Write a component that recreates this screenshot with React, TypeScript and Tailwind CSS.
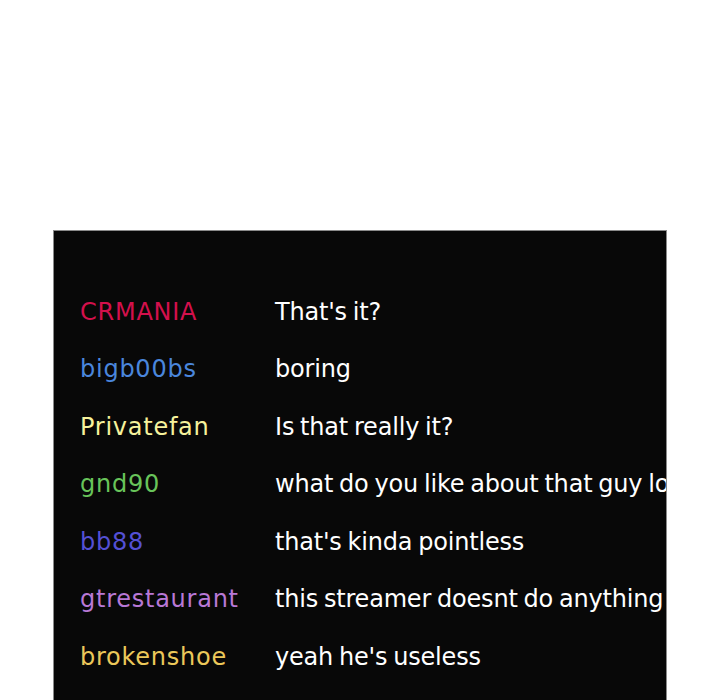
const messages = [
  { name: 'CRMANIA', color: 'text-[#d4104c]', text: "That's it?" },
  { name: 'bigb00bs', color: 'text-[#4a86dc]', text: 'boring' },
  { name: 'Privatefan', color: 'text-[#f6f29c]', text: 'Is that really it?' },
  { name: 'gnd90', color: 'text-[#68c45a]', text: 'what do you like about that guy lol' },
  { name: 'bb88', color: 'text-[#5450d4]', text: "that's kinda pointless" },
  { name: 'gtrestaurant', color: 'text-[#b878d6]', text: 'this streamer doesnt do anything' },
  { name: 'brokenshoe', color: 'text-[#ecc85a]', text: "yeah he's useless" },
];

export default function App() {
  return (
    <div className="w-[720px] h-[700px] overflow-hidden bg-white pt-[230px] pl-[53px] font-['DejaVu_Sans',sans-serif]">
      {/* chat panel, cut off at the right and bottom like the screenshot */}
      <div className="w-[614px] h-[480px] overflow-hidden bg-[#080808] border border-[#8a8a8a] pt-[52px] pl-[26px]">
        <div className="flex flex-col">
          {messages.map((m) => (
            <div key={m.name} className="flex h-[57.5px] items-center text-[24px] whitespace-nowrap">
              <span className={`w-[195px] shrink-0 tracking-[0.75px] ${m.color}`}>{m.name}</span>
              <span className="text-white tracking-[-0.2px] [word-spacing:-1.5px]">{m.text}</span>
            </div>
          ))}
        </div>
      </div>
    </div>
  );
}
